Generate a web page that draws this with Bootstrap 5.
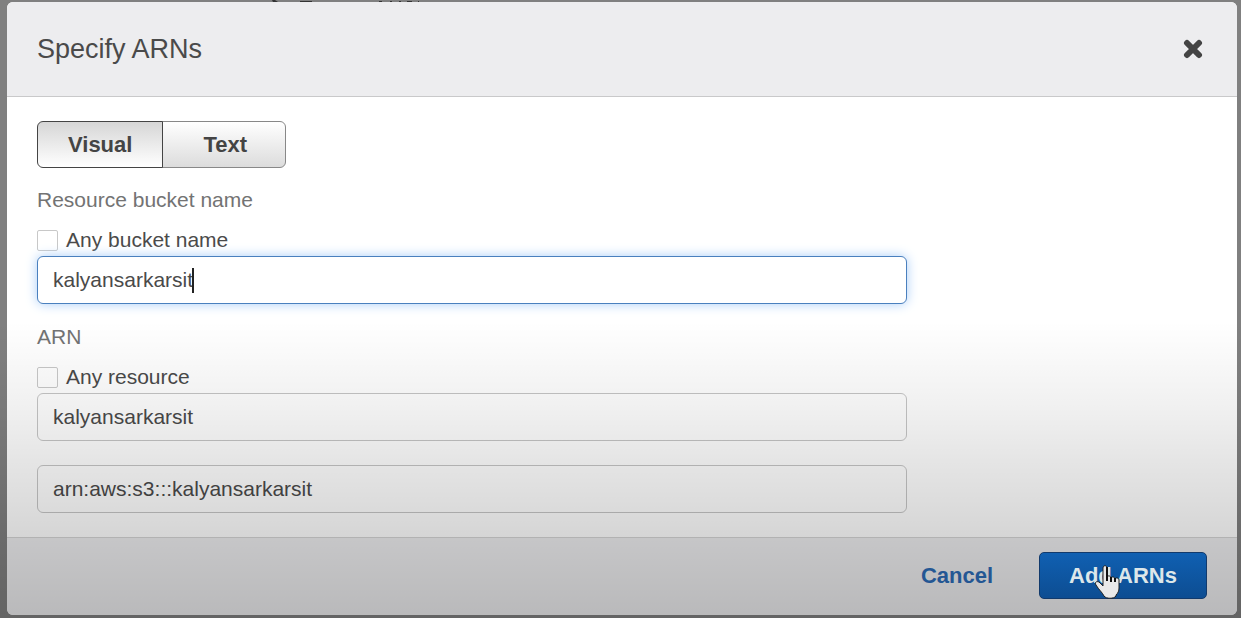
<!DOCTYPE html>
<html lang="en">
<head>
<meta charset="utf-8">
<meta name="viewport" content="width=device-width, initial-scale=1">
<title>Specify ARNs</title>
<link rel="stylesheet" href="https://cdn.jsdelivr.net/npm/bootstrap@5.3.0/dist/css/bootstrap.min.css">
<style>
  body {
    font-family: "Liberation Sans", Arial, sans-serif;
    font-size: 21px;
    line-height: 24px;
    color: #4a4a4a;
    background: #808080;
  }
  .arn-page { min-height: 100vh; padding: 2px 4px 2px 7px; }
  /* Shade that darkens the lower half of the screen */
  .arn-page::after {
    content: "";
    position: absolute;
    inset: 0;
    pointer-events: none;
    background: linear-gradient(rgba(0,0,0,0) 52%, rgba(0,0,0,.06) 66%, rgba(0,0,0,.165) 87%, rgba(0,0,0,.22) 100%);
  }
  .behind-text { position: absolute; left: 270px; top: 0; }
  .arn-dialog { background: #fff; border-radius: 6px; overflow: hidden; }
  .arn-header { background: #ededef; border-bottom: 1px solid #c9c9ca; padding: 31px 30px; }
  .arn-header h1 { font-size: 27px; line-height: 32px; color: #4a4a4a; }
  .close-x { width: 28px; height: 28px; color: #444; }
  .arn-body { padding: 24px 30px; }
  .mode-switch { margin-bottom: 20px; }
  .btn-mode, .btn-cancel, .btn-add { font-size: 22px; line-height: 25px; font-weight: 700; padding: 10px 30px; }
  .btn-mode {
    color: #444;
    border: 1px solid #888;
    border-radius: 6px;
    background: linear-gradient(#fff, #dcdcdc);
  }
  .btn-mode.btn.active {
    color: #444;
    border-color: #444;
    background: linear-gradient(#d6d6d6, #fff);
  }
  .btn-mode:last-child { padding-left: 40px; padding-right: 38px; }
  .field-block { max-width: 870px; margin-bottom: 21px; }
  .field-title { color: #737373; margin-bottom: 16px; }
  .any-row { margin-bottom: 4px; gap: 8px; }
  .any-row .form-check-input { width: 21px; height: 21px; border: 1px solid #c8c8c8; border-radius: 2px; }
  .arn-input.form-control {
    height: 48px;
    padding: 0 15px;
    font-size: 21px;
    color: #4a4a4a;
    border: 1px solid #c6c6c6;
    border-radius: 6px;
    background: #fff;
  }
  .arn-input.is-active { border-color: #4a80be; box-shadow: 0 0 12px #a9cdf8; }
  .text-caret { position: absolute; left: 155px; top: 12px; width: 2px; height: 25px; background: #222; }
  .arn-result { max-width: 870px; margin-top: 24px; }
  .arn-footer { background: #ededef; border-top: 1px solid #d5d5d5; padding: 14px 30px 16px; gap: 15px; }
  .btn-cancel { color: #2c6bb6; border: 1px solid transparent; }
  .add-wrap { z-index: 2; }
  .btn-add, .btn-add:hover {
    color: #dde7ea;
    border: 1px solid #123a6c;
    border-radius: 5px;
    padding-left: 29px;
    padding-right: 29px;
    background: linear-gradient(#1060b2, #0d4d92);
  }
  .hand-cursor { position: absolute; left: 54px; top: 12px; pointer-events: none; }
</style>
</head>
<body>
<div class="arn-page position-relative">
  <svg class="behind-text" width="160" height="2" aria-hidden="true" fill="#333">
    <path d="M2 0h3l3 2H3zM30 1h12v1H30zM109 1h3v1h-3zM120 1h2v1h-2zM129 1h2v1h-2zM137 1h5v1h-5zM148 1h1v1h-1z"/>
  </svg>
  <main class="arn-dialog" role="dialog" aria-labelledby="dialogTitle">
    <header class="arn-header d-flex align-items-center justify-content-between">
      <h1 id="dialogTitle" class="fw-normal mb-0">Specify ARNs</h1>
      <button type="button" class="close-x btn p-0 border-0 d-flex align-items-center justify-content-center" aria-label="Close">
        <svg width="20" height="20" viewBox="0 0 20 20" aria-hidden="true"><path d="M4 4l12 12M16 4L4 16" stroke="currentColor" stroke-width="6" stroke-linecap="round"/></svg>
      </button>
    </header>

    <form class="arn-body">
      <div class="mode-switch btn-group d-flex" role="group" aria-label="Editor mode">
        <button type="button" class="btn btn-mode active flex-grow-0">Visual</button>
        <button type="button" class="btn btn-mode flex-grow-0">Text</button>
      </div>

      <section class="field-block">
        <label class="field-title d-block" for="bucketName">Resource bucket name</label>
        <div class="any-row d-flex align-items-center">
          <input class="form-check-input m-0" type="checkbox" id="anyBucket">
          <label for="anyBucket">Any bucket name</label>
        </div>
        <div class="position-relative">
          <input class="arn-input is-active form-control" type="text" id="bucketName" value="kalyansarkarsit">
          <span class="text-caret"></span>
        </div>
      </section>

      <section class="field-block mb-0">
        <label class="field-title d-block" for="resourceName">ARN</label>
        <div class="any-row d-flex align-items-center">
          <input class="form-check-input m-0" type="checkbox" id="anyResource">
          <label for="anyResource">Any resource</label>
        </div>
        <input class="arn-input form-control" type="text" id="resourceName" value="kalyansarkarsit">
      </section>
      <div class="arn-result">
        <input class="arn-input form-control" type="text" aria-label="Full ARN" value="arn:aws:s3:::kalyansarkarsit">
      </div>
    </form>

    <footer class="arn-footer d-flex justify-content-end">
      <button type="button" class="btn btn-cancel">Cancel</button>
      <div class="add-wrap position-relative">
        <button type="button" class="btn btn-add">Add ARNs</button>
        <svg class="hand-cursor" width="28" height="36" viewBox="0 0 28 36" aria-hidden="true">
          <path d="M10 4c0-3 4-3 4 0v9c1-2 4-1 4 1 1-2 4-1 4 1 1-2 4-1 4 1v8c0 3-1 5-3 7v1c-2 3-10 3-12 0-2-4-5-6-8-11-2-3 1-4 3-3l4 4z" fill="#e9e9e9" stroke="#222" stroke-width="1"/>
          <path d="M14 3v14M18 13v5M22 14v4" fill="none" stroke="#111" stroke-width="2"/>
        </svg>
      </div>
    </footer>
  </main>
</div>
<script src="https://cdn.jsdelivr.net/npm/bootstrap@5.3.0/dist/js/bootstrap.bundle.min.js"></script>
</body>
</html>
